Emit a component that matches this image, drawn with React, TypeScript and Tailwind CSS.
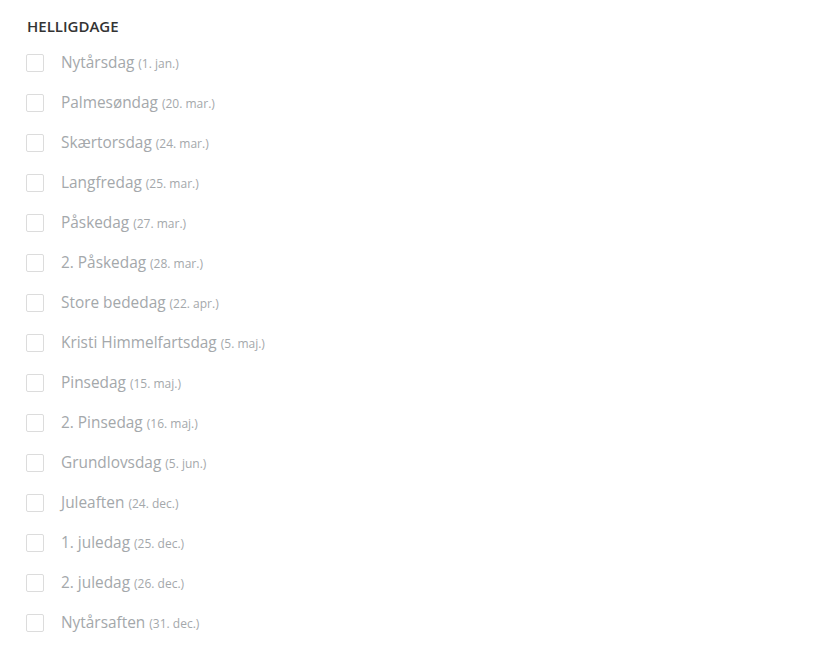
import React from "react";

const items: [string, string][] = [
  ["Nytårsdag", "(1. jan.)"],
  ["Palmesøndag", "(20. mar.)"],
  ["Skærtorsdag", "(24. mar.)"],
  ["Langfredag", "(25. mar.)"],
  ["Påskedag", "(27. mar.)"],
  ["2. Påskedag", "(28. mar.)"],
  ["Store bededag", "(22. apr.)"],
  ["Kristi Himmelfartsdag", "(5. maj.)"],
  ["Pinsedag", "(15. maj.)"],
  ["2. Pinsedag", "(16. maj.)"],
  ["Grundlovsdag", "(5. jun.)"],
  ["Juleaften", "(24. dec.)"],
  ["1. juledag", "(25. dec.)"],
  ["2. juledag", "(26. dec.)"],
  ["Nytårsaften", "(31. dec.)"],
];

export default function App() {
  return (
    <div
      className="w-[839px] h-[666px] bg-white px-[26px] pt-[16px]"
      style={{ fontFamily: '"Open Sans", sans-serif' }}
    >
      <h2 className="text-[15px] leading-[20px] font-semibold text-[#333333] mb-[7px] pl-[1px]">
        HELLIGDAGE
      </h2>
      <ul className="flex flex-col">
        {items.map(([name, date]) => (
          <li key={name} className="h-10 flex items-center">
            <span className="w-[18px] h-[18px] border border-[#dcdcdc] rounded-[2px] bg-white shrink-0" />
            <span className="ml-[17px] text-[15.4px] text-[#a4a8ab] leading-none -mt-[1px]">
              {name}{" "}
              <span className="text-[12px]">{date}</span>
            </span>
          </li>
        ))}
      </ul>
    </div>
  );
}
